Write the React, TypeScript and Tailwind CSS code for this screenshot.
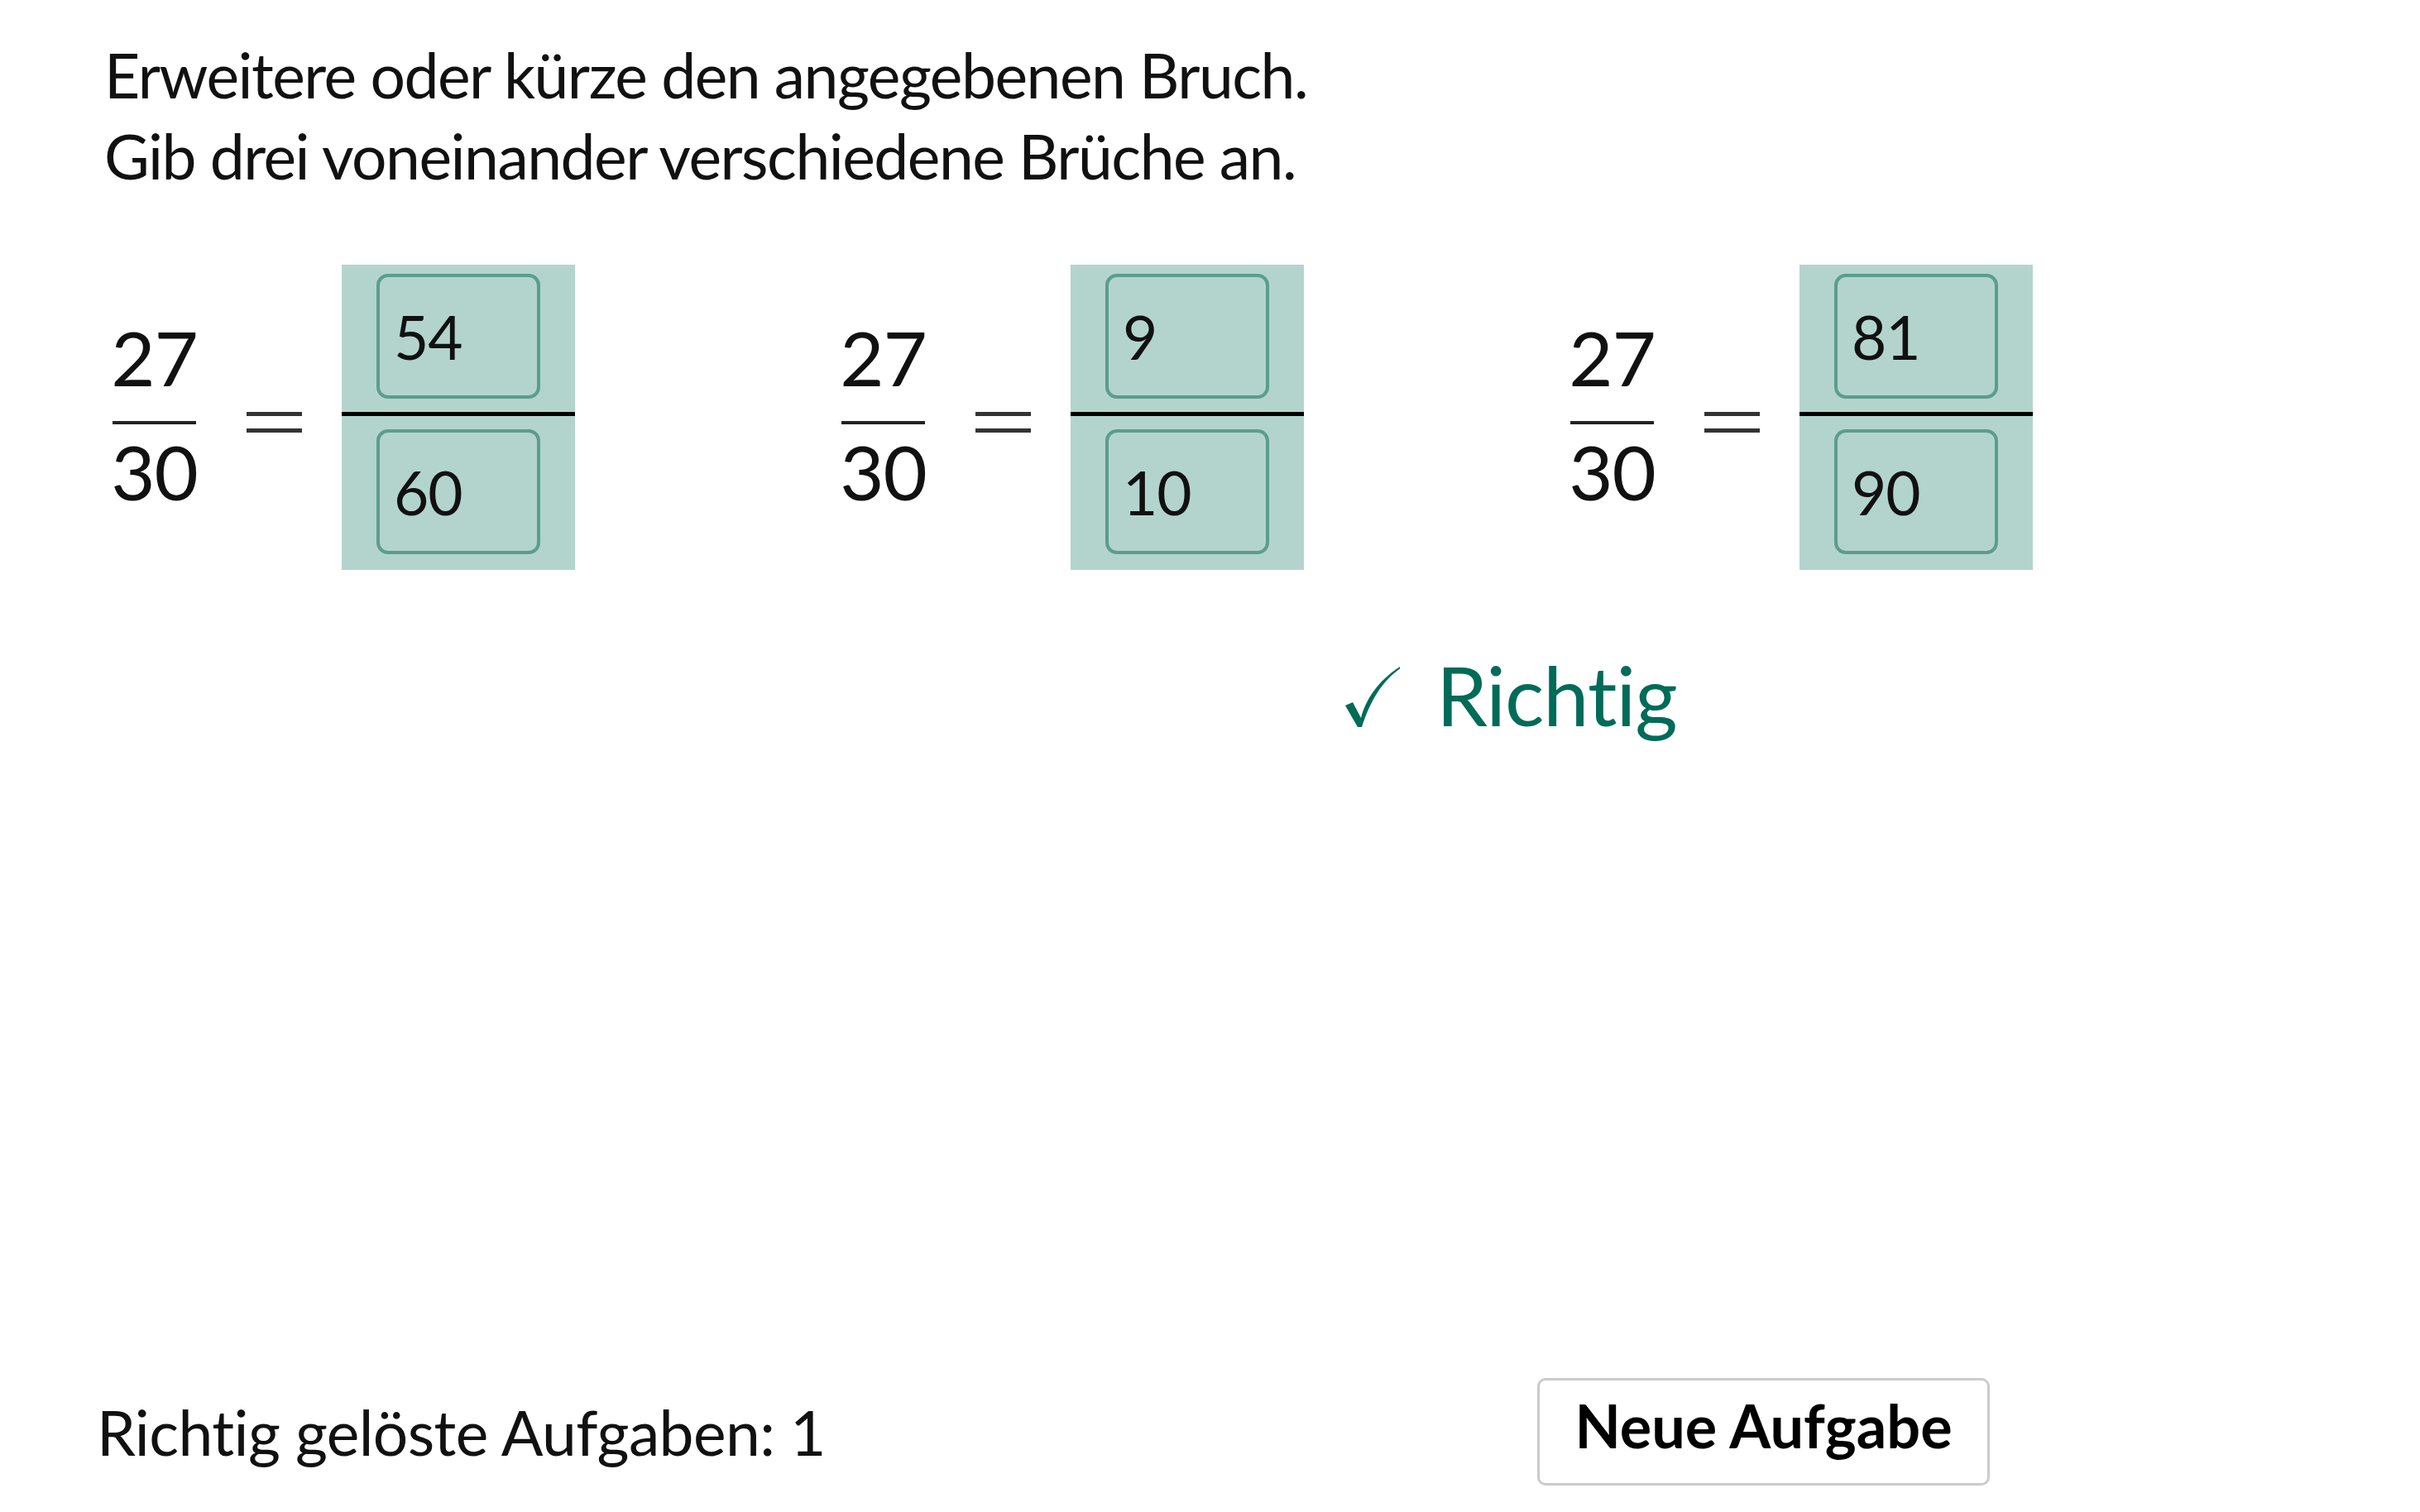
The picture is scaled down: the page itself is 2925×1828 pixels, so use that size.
import React from 'react'

const fractions = [
  { num: '27', den: '30', top: '54', bottom: '60' },
  { num: '27', den: '30', top: '9', bottom: '10' },
  { num: '27', den: '30', top: '81', bottom: '90' },
]

function CheckMark() {
  return (
    <svg width="66" height="73" viewBox="0 0 66 73" className="mt-[16px] shrink-0 text-[#006b58]">
      <path
        d="M0 47 L9 43 L19 62 C24 42 38 18 66 0 L66 2.5 C44 18 30 42 20 73 L15 73 Z"
        fill="currentColor"
      />
    </svg>
  )
}

function AnswerInput({ value }: { value: string }) {
  return (
    <input
      readOnly
      value={value}
      className="w-[198px] h-[151px] rounded-[14px] border-[4px] border-[#5c9d8d] bg-transparent pl-[17px] text-[73px] text-[#111] outline-none font-['Lato',sans-serif] tracking-[-1px]"
    />
  )
}

function FractionTask({ num, den, top, bottom }: { num: string; den: string; top: string; bottom: string }) {
  return (
    <div className="flex items-start">
      {/* given fraction */}
      <div className="mt-[62px] flex w-[101px] flex-col items-center">
        <span className="text-[92px] leading-[100px] tracking-[-1px]">{num}</span>
        <div className="mt-[27px] h-[4px] w-full bg-[#222]" />
        <span className="mt-[7px] text-[92px] leading-[100px] tracking-[-1px]">{den}</span>
      </div>

      {/* equals sign */}
      <div className="ml-[61px] mt-[178px] flex w-[67px] flex-col gap-[15px]">
        <div className="h-[5px] bg-[#333]" />
        <div className="h-[5px] bg-[#333]" />
      </div>

      {/* answer box */}
      <div className="ml-[48px] flex w-[282px] flex-col items-center bg-[#b3d4cd] pt-[11px] pb-[19px]">
        <AnswerInput value={top} />
        <div className="mt-[16px] h-[5px] w-full bg-black" />
        <div className="mt-[16px]">
          <AnswerInput value={bottom} />
        </div>
      </div>
    </div>
  )
}

export default function App() {
  return (
    <div className="flex min-h-screen flex-col bg-white font-['Lato',sans-serif] text-[#111] [font-variant-ligatures:none]">
      {/* Instructions */}
      <div className="pl-[126px] pt-[41px] text-[75px] leading-[98px] tracking-[-1.5px]">
        <p>Erweitere oder kürze den angegebenen Bruch.</p>
        <p>Gib drei voneinander verschiedene Brüche an.</p>
      </div>

      {/* Fractions */}
      <div className="mt-[83px] flex gap-[322px] pl-[136px]">
        {fractions.map((f, i) => (
          <FractionTask key={i} {...f} />
        ))}
      </div>

      {/* Feedback */}
      <div className="mt-[101px] flex items-start pl-[1626px]">
        <CheckMark />
        <span className="ml-[44px] text-[99px] leading-[100px] text-[#006b58] tracking-[-1px]">Richtig</span>
      </div>

      {/* Footer */}
      <div className="mt-auto flex items-center justify-between pb-[32px] pl-[117px] pr-[520px]">
        <span className="text-[75px] leading-[98px] tracking-[-0.6px]">Richtig gelöste Aufgaben: 1</span>
        <button className="h-[130px] w-[547px] rounded-[10px] border-[3px] border-[#cbcbcb] bg-white pb-[16px] text-[72px] font-bold text-black">
          Neue Aufgabe
        </button>
      </div>
    </div>
  )
}
